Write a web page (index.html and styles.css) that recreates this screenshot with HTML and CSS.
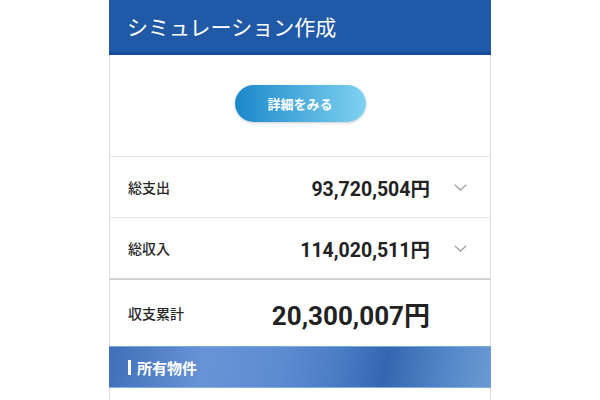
FILE: index.html
```html
<!DOCTYPE html>
<html lang="ja">
<head>
    <meta charset="UTF-8">
    <meta name="viewport" content="width=device-width, initial-scale=1.0">
    <title>シミュレーション作成</title>
    <link rel="stylesheet" href="styles.css">
</head>
<body>
    <div class="page">
        <div class="page-header">シミュレーション作成</div>

        <div class="detail-area">
            <button class="detail-btn">詳細をみる</button>
        </div>

        <!-- 収支の一覧 -->
        <div class="summary">
            <div class="summary-row">
                <div class="summary-label">総支出</div>
                <div class="summary-value">93,720,504円</div>
                <div class="summary-arrow">
                    <svg width="13" height="7" viewBox="0 0 13 7"><path d="M0.7 0.7 L6.5 6 L12.3 0.7" fill="none" stroke="#a3a3a3" stroke-width="1.3"/></svg>
                </div>
            </div>
            <div class="summary-row">
                <div class="summary-label">総収入</div>
                <div class="summary-value">114,020,511円</div>
                <div class="summary-arrow">
                    <svg width="13" height="7" viewBox="0 0 13 7"><path d="M0.7 0.7 L6.5 6 L12.3 0.7" fill="none" stroke="#a3a3a3" stroke-width="1.3"/></svg>
                </div>
            </div>
            <div class="summary-row total">
                <div class="summary-label">収支累計</div>
                <div class="summary-value">20,300,007円</div>
                <div class="summary-arrow"></div>
            </div>
        </div>

        <div class="section-title"><span class="section-bar"></span>所有物件</div>
    </div>
</body>
</html>
```

FILE: styles.css
```css
body {
    margin: 0;
    background-color: #fff;
    font-family: Roboto, "Noto Sans CJK JP", sans-serif;
    color: #222;
}
.page {
    width: 380px;
    min-height: 400px;
    margin: 0 auto;
    border-left: 1px solid #dcdcdc;
    border-right: 1px solid #dcdcdc;
}
.page-header {
    margin: 0 -1px;
    height: 52px;
    padding-left: 18px;
    background-color: #2059a5;
    border-bottom: 3px solid #154d9b;
    color: #fff;
    font-family: "Noto Sans CJK JP", sans-serif;
    font-size: 21px;
    line-height: 52px;
}
.detail-area {
    display: flex;
    justify-content: center;
    padding: 30px 0 34px;
    border-bottom: 1px solid #e6e6e6;
}
.detail-btn {
    width: 131px;
    height: 37px;
    border: none;
    border-radius: 19px;
    background: linear-gradient(to right, #1b88c9, #7fd2f1);
    box-shadow: 0 1px 3px rgba(0, 0, 0, 0.2);
    color: #fff;
    font-family: "Noto Sans CJK JP", sans-serif;
    font-size: 13px;
    font-weight: bold;
    cursor: pointer;
}
.summary-row {
    display: flex;
    align-items: center;
    height: 60px;
    padding-left: 18px;
    border-bottom: 1px solid #e6e6e6;
}
.summary-row.total {
    height: 66px;
    border-top: 2px solid #d2d2d2;
    border-bottom: none;
    margin-top: -1px;
}
.summary-label {
    font-family: "Noto Sans CJK JP", sans-serif;
    font-size: 14px;
    font-weight: 500;
    color: #262626;
}
.summary-value {
    margin-left: auto;
    font-size: 19.5px;
    font-weight: bold;
    color: #222;
}
.total .summary-value {
    font-size: 26px;
}
.summary-arrow {
    display: flex;
    justify-content: center;
    width: 60px;
}
.section-title {
    display: flex;
    align-items: center;
    height: 40px;
    margin: 0 -1px;
    padding-left: 19px;
    border-top: 1px solid #7ea6e0;
    border-bottom: 1px solid #86aee3;
    background: linear-gradient(100deg, #3f6fb8 0%, #6893d6 25%, #5d8bd2 45%, #4a7cc4 60%, #3267b0 72%, #4f85c5 86%, #6c9ad4 100%);
    color: #fff;
    font-family: "Noto Sans CJK JP", sans-serif;
    font-size: 15px;
    font-weight: bold;
}
.section-bar {
    width: 3px;
    height: 15px;
    margin-right: 6px;
    background-color: #fff;
}
```
